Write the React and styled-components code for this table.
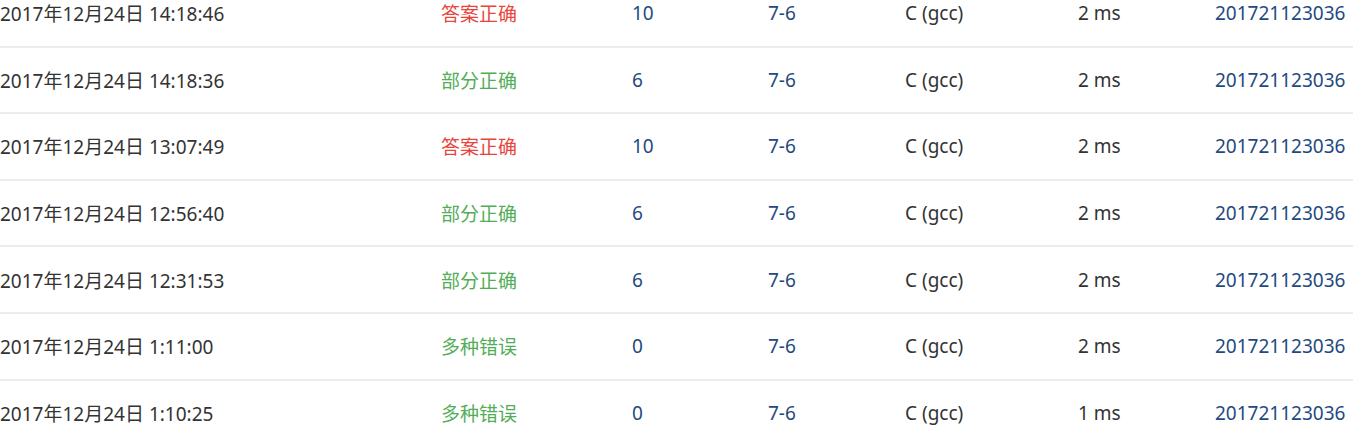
import React from "react";
import styled, { createGlobalStyle } from "styled-components";

const GlobalStyle = createGlobalStyle`
  html, body {
    margin: 0;
    padding: 0;
    background: #fff;
    overflow: hidden;
  }
`;

const Page = styled.div`
  width: 1353px;
  margin-top: -20px;
  font-family: "Noto Sans", "Noto Sans CJK SC", sans-serif;
  font-size: 19px;
  color: #333;
`;

const Table = styled.table`
  width: 1353px;
  border-collapse: collapse;
  table-layout: fixed;
`;

const Row = styled.tr`
  height: 66.6px;
  border-bottom: 2px solid #ececec;
`;

const Cell = styled.td`
  padding: 0;
  width: ${(props) => props.width}px;
  vertical-align: middle;
  white-space: nowrap;
  color: ${(props) => props.color || "#333"};
`;

const Link = styled.a`
  color: #1f4a80;
  text-decoration: none;
`;

const STATUS_COLORS = {
  答案正确: "#e8453c",
  部分正确: "#52ad57",
  多种错误: "#52ad57",
};

const records = [
  { time: "2017年12月24日 14:18:46", status: "答案正确", score: 10, mem: "2 ms" },
  { time: "2017年12月24日 14:18:36", status: "部分正确", score: 6, mem: "2 ms" },
  { time: "2017年12月24日 13:07:49", status: "答案正确", score: 10, mem: "2 ms" },
  { time: "2017年12月24日 12:56:40", status: "部分正确", score: 6, mem: "2 ms" },
  { time: "2017年12月24日 12:31:53", status: "部分正确", score: 6, mem: "2 ms" },
  { time: "2017年12月24日 1:11:00", status: "多种错误", score: 0, mem: "2 ms" },
  { time: "2017年12月24日 1:10:25", status: "多种错误", score: 0, mem: "1 ms" },
];

export default function App() {
  return (
    <Page>
      <GlobalStyle />
      <Table>
        <tbody>
          {records.map((record, i) => (
            <Row key={i}>
              <Cell width={441}>{record.time}</Cell>
              <Cell width={191} color={STATUS_COLORS[record.status]}>
                {record.status}
              </Cell>
              <Cell width={136} color="#1f4a80">
                {record.score}
              </Cell>
              <Cell width={137}>
                <Link href="#">7-6</Link>
              </Cell>
              <Cell width={173}>C (gcc)</Cell>
              <Cell width={137}>{record.mem}</Cell>
              <Cell width={138}>
                <Link href="#">201721123036</Link>
              </Cell>
            </Row>
          ))}
        </tbody>
      </Table>
    </Page>
  );
}
